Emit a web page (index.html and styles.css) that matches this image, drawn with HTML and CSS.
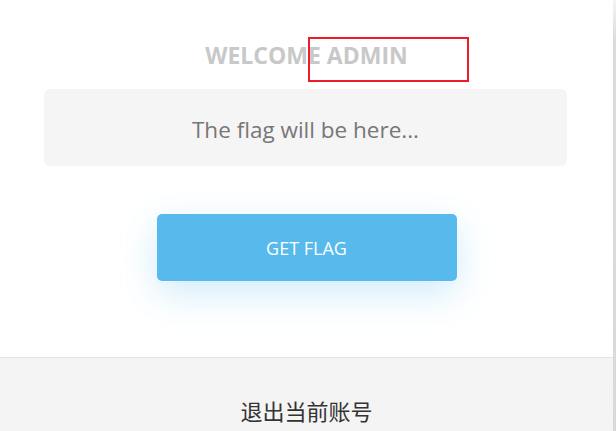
FILE: index.html
```html
<!DOCTYPE html>
<html>
<head>
<meta charset="utf-8">
<link rel="stylesheet" href="styles.css">
</head>
<body>
<div class="frame">
  <div class="main">
    <div class="panel">
      <h1 class="title">WELCOME ADMIN</h1>
      <div class="highlight"></div>
      <div class="flag-box">The flag will be here...</div>
      <div class="btn-row"><button class="btn">GET FLAG</button></div>
    </div>
    <div class="footer">退出当前账号</div>
  </div>
  <div class="edge"></div>
</div>
</body>
</html>
```
FILE: styles.css
```css
html, body {
  margin: 0;
  padding: 0;
  background: #fff;
}
.frame {
  display: flex;
  width: 616px;
  height: 431px;
  overflow: hidden;
}
.main {
  flex: 1;
  display: flex;
  flex-direction: column;
}
.edge {
  width: 3px;
  background: linear-gradient(#f4f4f4, #dcdcdc 40px, #d9d9d9);
}
.panel {
  position: relative;
  height: 357px;
  border-bottom: 1px solid #dbe6ef;
}
.title {
  margin: 0;
  padding-top: 40px;
  height: 47px;
  box-sizing: border-box;
  text-align: center;
  font-family: "Open Sans", "Liberation Sans", sans-serif;
  font-weight: 700;
  font-size: 23px;
  line-height: 30px;
  color: #c8c8c8;
}
.highlight {
  position: absolute;
  left: 308px;
  top: 37px;
  width: 157px;
  height: 41px;
  border: 2px solid #ee1c25;
}
.flag-box {
  margin: 42px 46px 0 44px;
  height: 77px;
  padding-top: 3px;
  box-sizing: border-box;
  border-radius: 6px;
  background: #f5f5f5;
  display: flex;
  align-items: center;
  justify-content: center;
  font-family: "Open Sans", "Liberation Sans", sans-serif;
  font-size: 22.5px;
  color: #777;
}
.btn-row {
  display: flex;
  justify-content: center;
  margin-top: 48px;
}
.btn {
  width: 300px;
  height: 67px;
  border: 0;
  border-radius: 5px;
  background: #57b9ec;
  color: #fff;
  font-family: "Open Sans", "Liberation Sans", sans-serif;
  font-size: 18px;
  box-shadow: 0 12px 36px rgba(87, 185, 236, 0.28);
  padding: 0;
}
.footer {
  flex: 1;
  background: #f4f4f4;
  padding-top: 37px;
  text-align: center;
  font-family: "Noto Sans CJK SC", sans-serif;
  font-size: 22px;
  color: #333;
  line-height: 30px;
}
```
